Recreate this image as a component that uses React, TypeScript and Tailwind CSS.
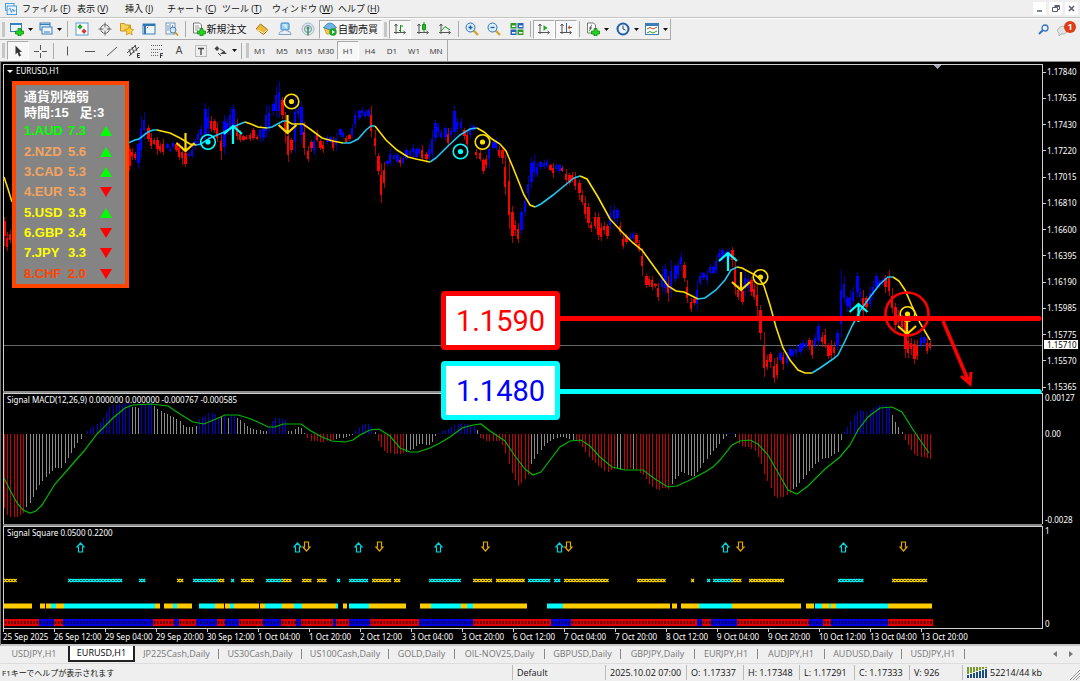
import type { ReactNode } from "react";
import { Fragment } from "react";
import clsx from "clsx";

const MENUS = [
  ["ファイル", "F", "w-[55px]"],
  ["表示", "V", "w-[48px]"],
  ["挿入", "I", "w-[42px]"],
  ["チャート", "C", "w-[55px]"],
  ["ツール", "T", "w-[50px]"],
  ["ウィンドウ", "W", "w-[66px]"],
  ["ヘルプ", "H", "w-[50px]"],
] as const;

const PERIODS = ["M1", "M5", "M15", "M30", "H1", "H4", "D1", "W1", "MN"];

const TABS = [
  ["USDJPY,H1", "w-[68px]"],
  ["EURUSD,H1", "w-[67px]"],
  ["JP225Cash,Daily", "w-[84px]"],
  ["US30Cash,Daily", "w-[83px]"],
  ["US100Cash,Daily", "w-[87px]"],
  ["GOLD,Daily", "w-[66px]"],
  ["OIL-NOV25,Daily", "w-[90px]"],
  ["GBPUSD,Daily", "w-[76px]"],
  ["GBPJPY,Daily", "w-[74px]"],
  ["EURJPY,H1", "w-[63px]"],
  ["AUDJPY,H1", "w-[67px]"],
  ["AUDUSD,Daily", "w-[77px]"],
  ["USDJPY,H1", "w-[63px]"],
] as const;

const STATUS = [
  ["Default", "w-[93px]"],
  ["2025.10.02 07:00", "w-[81px]"],
  ["O: 1.17337", "w-[57px]"],
  ["H: 1.17348", "w-[56px]"],
  ["L: 1.17291", "w-[55px]"],
  ["C: 1.17333", "w-[55px]"],
  ["V: 926", "w-[53px]"],
] as const;

const STRENGTH = [
  ["1.AUD", "7.3", true, "text-[#00ff00]"],
  ["2.NZD", "5.6", true, "text-[#f4a460]"],
  ["3.CAD", "5.3", true, "text-[#f4a460]"],
  ["4.EUR", "5.3", false, "text-[#f4a460]"],
  ["5.USD", "3.9", true, "text-[#ffff00]"],
  ["6.GBP", "3.4", false, "text-[#ffff00]"],
  ["7.JPY", "3.3", false, "text-[#ffff00]"],
  ["8.CHF", "2.0", false, "text-[#ff4500]"],
] as const;

const PRICES = [
  "1.17840", "1.17635", "1.17430", "1.17220", "1.17015", "1.16810", "1.16600",
  "1.16395", "1.16190", "1.15985", "1.15775", "1.15570", "1.15365",
];

const TIMES = [
  "25 Sep 2025", "26 Sep 12:00", "29 Sep 04:00", "29 Sep 20:00", "30 Sep 12:00",
  "1 Oct 04:00", "1 Oct 20:00", "2 Oct 12:00", "3 Oct 04:00", "3 Oct 20:00",
  "6 Oct 12:00", "7 Oct 04:00", "7 Oct 20:00", "8 Oct 12:00", "9 Oct 04:00",
  "9 Oct 20:00", "10 Oct 12:00", "13 Oct 04:00", "13 Oct 20:00",
];

// x, direction (b = up, r = down), high-low
const CANDLES = `4r217-246 7r232-251 10r230-243
129r145-171 132r148-160 135r152-160 138b140-169 141b116-158 144b112-140 148r125-142 151r133-149 154r138-145
157r137-155 160r143-153 163r139-155 167b143-149 170b147-152 173b141-149 176r142-152 179r143-160 182r146-165
185r150-167 189b152-157 192b146-158 195b139-150 198b130-143 201b125-138 205b103-142 208b107-140 211r116-132
214r119-133 217r122-142 221r133-160 224b115-155 227b118-135 230b107-135 233b104-136 237r119-140 240r130-142
243r135-141 246r135-140 250r133-141 253r128-140 257r135-140 260b125-143 263b127-141 266b105-137 269b105-132
273b102-116 276b86-117 279b81-118 282r97-119 285r112-143 288r125-162 291r138-153 295b95-153 298b104-119
301b101-143 304r122-155 308r146-162 311r140-152 314b135-155 317r130-142 320r139-150 323r141-153 327b135-144
330b136-143 333r137-151 336b133-151 340b128-137 343b131-138 346r136-143 349r134-141 352b124-138 355b110-128
359b109-120 362b107-116 365b110-118 368b109-118 371r106-137 375r130-155 378r153-175 381r163-203 384r162-188
387b160-166 390b149-166 394b153-160 397b153-164 400r157-167 403b155-165 406b148-160 410b149-157 413b144-157
416b147-160 419b147-155 422r145-161 426r152-163 429b144-160 432b130-160 435b120-142 438b123-137 441b130-139
445b126-140 448r128-147 451b128-139 454b106-138 457b118-132 461b118-131 464r128-140 467r130-148 470b124-138
473b125-131 476r149-159 480r150-161 483r158-174 486r155-168 489b141-169 493b140-150 496b138-151 499r146-158
502r148-164 505r155-195 509r160-229 512r206-243 515r220-236 518r223-243 521b208-235 525b194-216 528b176-202
531b158-188 534b154-177 537b163-177 540b161-170 544b160-169 547b159-168 550r164-171 553r163-178 556b163-171
559b164-173 562r166-172 566r169-186 569r173-185 572r172-182 575r172-190 579r180-200 582r190-205 585r196-219
588r203-228 591r222-232 595r212-229 598r213-240 601r223-241 604r222-234 607r224-239 610b206-230 614b205-222
617b208-224 620r222-235 623r234-249 626r234-244 630b233-242 633b231-240 636r233-246 639r240-252 642r248-276
646r274-288 649r276-287 652r276-290 655r283-288 658r283-301 662b266-292 665b264-294 668r276-302 671b260-298
675b263-283 678b260-278 681b252-270 684r262-282 687r280-303 691r298-312 694r298-305 697b281-310 700b272-286
703b272-280 707b270-285 710b264-275 713b265-275 716b255-274 719b249-262 722b248-262 726b249-258 729b249-260
732r247-267 735r257-295 738r285-300 742r288-305 745b270-296 748b274-292 751r277-296 754r284-300 757r285-318
760r305-340 764r332-377 767r355-370 770r352-368 774r358-383 777r357-379 780b351-362 783r352-370 787b352-366
790b347-358 793b348-357 796b345-357 800b342-355 803b340-350 806b340-349 809r338-350 812r340-359 815b334-348
818b322-346 822r332-347 825r329-348 828r343-359 831r340-359 834r342-359 837b330-350 841b270-337 844b276-303
847b296-312 850b290-312 853b286-305 857b272-297 860b288-302 863r290-316 866r296-310 870b286-308 873b281-300
876b273-290 879b279-288 882b277-286 885r275-293 889r270-296 892r288-313 895r303-330 898r310-328 902r315-330
905r315-358 908r334-358 911r338-355 914r340-364 917r340-360 921b334-348 924b335-347 927r338-354 930r340-350`
  .split(/\s+/)
  .map((row) => {
    const [, x, dir, high, low] = row.match(/(\d+)([br])(\d+)-(\d+)/)!;
    return { x: +x, up: dir === "b", high: +high, low: +low };
  });

const AVERAGE = [
  ["#ffd700", "4,177 8,189 12,202"],
  ["#1cc8f5", "128,143 135,140 139,139 148,132 153,130 157,130"],
  ["#ffe000", "157,130 170,133 180,138 190,144 196,145"],
  ["#1cc8f5", "196,145 201,144 210,138 222,133 235,126 245,122"],
  ["#ffe000", "245,122 251,124 258,127 267,128"],
  ["#1cc8f5", "267,128 272,127 283,121 287,121"],
  ["#ffe000", "287,121 292,124 303,124 310,129 322,138 333,141 343,143"],
  ["#1cc8f5", "343,143 350,143 358,139 366,130 371,126 375,126"],
  ["#ffe000", "375,126 386,140 397,150 408,157 416,159 430,162"],
  ["#1cc8f5", "430,162 436,158 448,146 460,135 470,129 477,128"],
  ["#ffe000", "477,128 484,132 492,139 500,144 506,151 512,165 518,180 524,195 530,205 535,207"],
  ["#1cc8f5", "535,207 541,204 553,195 564,186 574,178 580,176"],
  ["#ffe000", "580,176 587,179 598,197 610,219 622,232 633,243 642,250 655,268 668,286 676,291 684,292 692,296 698,299"],
  ["#1cc8f5", "698,299 705,298 716,290 725,280 731,270 737,267"],
  ["#ffe000", "737,267 742,268 755,275 759,278 764,286 770,305 776,327 783,348 790,360 798,370 805,373 812,373"],
  ["#1cc8f5", "812,373 820,368 833,359 838,355 845,341 852,326 860,311 870,297 880,284 888,277 893,277"],
  ["#ffe000", "893,277 899,281 905,290 912,306 920,323 930,340"],
] as const;

// Histogram outline: colour, then x:y points that are interpolated between bars
const MACD = `r 4:507 7:515 10:517 17:517 23:513|g 27:507 30:503 33:497 36:491 39:486 43:481 49:474 55:468 62:468 65:463 72:452 78:443 81:439
b 87:431 91:428 97:424 101:422 104:417 107:412 110:407 113:405 120:404 129:403|g 130:406 138:408|b 139:404 152:403
g 154:405 160:411 165:413 170:416 176:418 180:421 183:425 187:427 190:427 196:426|b 197:421 205:415 210:412 215:414 219:417
g 220:417 223:417|b 224:416 226:416|g 227:418 229:418|b 230:415 236:416|g 237:417 244:423 250:428 257:430 267:431
b 269:427 275:418 280:418 286:420|g 287:430 291:432 294:430 298:427 302:428 305:433|r 307:437 311:441 317:441 324:442 334:440
g 335:440 341:438 347:437 353:434|b 355:432 359:427 363:424 368:423 372:427|g 373:430 376:433|r 377:438 381:447 387:453 400:454 405:453
g 406:452 413:449 420:444 430:445 434:440 436:435|b 438:433 445:430 450:428 455:425 461:423 466:424 474:426
g 475:427 479:432|r 481:438 487:441 495:441 499:440 504:446 509:464 514:478 519:486 524:481 529:474
g 530:467 537:455 543:448 548:442 555:439 562:437 573:440|r 574:440 580:443 590:458 597:465 607:472 615:469
g 616:468 621:470|r 622:470 631:468|g 632:469 635:469|r 636:469 643:475 650:484 658:491 662:488 670:489
g 671:485 676:478 682:472 687:474 693:477 698:472 705:462 713:451 719:446 722:440 726:436|b 728:433 733:433|g 734:437 736:437
r 737:442 742:446 748:447 755:451 760:460 765:475 772:490 775:498 784:497 790:493
g 791:490 796:488 801:481 808:473 815:465 822:459 828:458 834:454 838:452 841:441 843:435
b 845:432 851:421 856:412 860:410 866:412 872:409 880:405 886:405 890:407|g 891:412 896:423 902:432
r 903:437 911:449 916:456 924:457 932:459`
  .split(/[|\n]/)
  .map((run) => {
    const [tone, ...points] = run.trim().split(" ");
    return { tone, points: points.map((p) => p.split(":").map(Number)) };
  });

const BAR_STEP = 3.194;
const BAR_TONES: Record<string, string> = { r: "#c80000", g: "#8c8c8c", b: "#0000d8" };

function macdBars() {
  const bars: { x: number; y: number; tone: string }[] = [];
  for (let i = 0; i < 291; i++) {
    const x = 4.5 + i * BAR_STEP;
    const run = MACD.find((r) => x >= r.points[0][0] - 0.6 && x <= r.points[r.points.length - 1][0] + 0.9);
    if (!run) continue;
    const next = run.points.findIndex((p) => p[0] >= x);
    let y = run.points[next < 0 ? run.points.length - 1 : next][1];
    if (next > 0) {
      const [x0, y0] = run.points[next - 1];
      const [x1, y1] = run.points[next];
      y = y0 + ((x - x0) / (x1 - x0)) * (y1 - y0);
    }
    bars.push({ x: Math.floor(x), y: Math.round(y), tone: BAR_TONES[run.tone] });
  }
  return bars;
}

const SIGNAL_LINE =
  "4,478 10,490 17,503 23,510 30,513 36,511 42,505 55,484 70,467 84,451 97,434 113,418 125,408 133,405 150,404 160,405 168,406 180,414 193,422 204,424 216,419 225,415 238,415 248,418 258,422 268,427 275,427 283,424 301,424 311,431 322,437 332,441 345,442 353,440 360,435 370,430 379,429 390,436 400,448 410,452 418,452 430,448 440,443 450,437 462,428 473,425 481,424 490,431 505,441 515,456 525,469 533,475 541,472 550,460 560,447 570,441 581,440 590,446 600,457 612,467 625,470 643,470 655,479 668,487 677,486 690,480 705,472 713,467 720,460 732,445 740,441 750,440 758,444 768,455 780,476 788,490 797,494 808,486 825,469 840,457 850,445 858,430 868,417 880,408 892,407 902,412 912,428 920,440 929,453";

const parseRuns = (text: string) =>
  text.split(" ").map((run) => {
    const [from, to] = run.slice(1).split("-").map(Number);
    return { tone: run[0], from, to };
  });

const CROSSES = parseRuns(
  "y4-18 c68-123 c139-146 y177-184 c193-218 y218-223 c231-235 y241-255 c266-282 y282-293 y302-312 y317-328 c337-340 c349-369 y372-392 y394-401 c429-462 y473-491 y496-526 c528-551 c554-561 y564-609 y637-666 y691-695 c707-711 c713-732 y732-743 y749-784 c838-864 y892-928",
);
const BAND = parseRuns(
  "y4-32 y40-45 y46-51 c51-56 y56-64 c64-155 y155-160 y164-173 c173-177 y177-192 c199-215 y215-224 y225-230 c230-234 y234-259 y260-265 c265-282 y282-294 c294-302 y302-336 c336-338 y343-347 c349-369 y369-406 y420-431 c431-461 y461-467 c467-473 y473-527 c547-563 y563-670 y672-677 y681-699 c699-732 y732-801 y806-814 c815-822 y822-829 c829-831 y831-836 c836-888 y888-932",
);
const SQUARES = parseRuns(
  "r4-39 b39-54 r54-63 b63-153 r153-174 b174-179 r179-196 b196-217 r217-225 b225-239 r239-263 b263-281 r281-296 b296-301 r301-333 b333-336 r336-349 b349-370 r370-419 b419-473 r473-551 b551-571 r571-697 b697-702 r702-711 b711-737 r737-809 b809-823 r823-831 b831-888 r888-933",
);
const UP_SIGNALS = [80, 297, 358, 438, 559, 725, 843];
const DOWN_SIGNALS = [306, 379, 485, 568, 740, 903];

function steps(from: number, to: number) {
  const count = Math.max(1, Math.round((to - from) / BAR_STEP));
  return Array.from({ length: count }, (_, i) => from + 1.6 + i * BAR_STEP);
}

/* ---------- toolbar ---------- */

function Icon({ children, size = 14 }: { children: ReactNode; size?: number }) {
  return (
    <svg aria-hidden width={size} height={size} viewBox="0 0 14 14" fill="none" className="shrink-0">
      {children}
    </svg>
  );
}

function Caret() {
  return (
    <svg aria-hidden width="5" height="3" viewBox="0 0 5 3" className="shrink-0">
      <path d="M0 0h5L2.500 3z" fill="#111" />
    </svg>
  );
}

function Grip() {
  return <span className="mx-[2px] h-[15px] w-[3px] shrink-0 bg-[#c6c6c6]" />;
}

function Divider() {
  return <span className="mx-[2px] h-4 w-px shrink-0 bg-[#aaa]" />;
}

type ToolProps = { label: string; children: ReactNode; pressed?: boolean; width?: string };

function Tool({ label, children, pressed, width = "w-[22px]" }: ToolProps) {
  return (
    <button
      type="button"
      aria-label={label}
      className={clsx(
        "flex h-[19px] shrink-0 items-center justify-center gap-1 whitespace-nowrap border text-[10px] text-[#111]",
        pressed ? "border-b-white border-r-white border-l-[#aaa] border-t-[#aaa] bg-[#f7f7f7]" : "border-transparent",
        width,
      )}
    >
      {children}
    </button>
  );
}

const plus = <path d="M8 6.500h3V9h2.500v3H11v2H8v-2H5.500V9H8z" fill="#22d322" stroke="#0a7d0a" strokeWidth=".7" />;
const axes = <path d="M3 2v10M1.500 4 3 2l1.500 2M1 10.500h11M10.500 9l2 1.500-2 1.500" stroke="#555" />;

function MainToolbar() {
  return (
    <div className="flex h-[21px] w-max items-center border-b border-r border-[#aaa]">
      <Grip />
      <Tool label="新規チャート" width="w-[28px]">
        <Icon>
          <rect x=".5" y="1.500" width="11" height="8" fill="#eaf4fd" stroke="#3a7fb8" />
          <path d="M.5 2.500h11" stroke="#3a7fb8" />
          {plus}
        </Icon>
        <Caret />
      </Tool>
      <Tool label="チャートの組表示" width="w-[30px]">
        <Icon>
          <rect x="1" y="1" width="10" height="7" fill="#d5e9fa" stroke="#3a7fb8" />
          <rect x="3" y="5" width="10" height="7" fill="#eaf4fd" stroke="#3a7fb8" />
          <path d="M1 2.500h10M5 10h6" stroke="#3a7fb8" />
        </Icon>
        <Caret />
      </Tool>
      <Divider />
      <Tool label="気配値表示" width="w-[23px]">
        <Icon>
          <rect x="1" y="1" width="12" height="12" fill="#fff" stroke="#5b9bd0" />
          <path d="M5 2 7.500 4.700 5 7.500 2.500 4.700z" fill="#1ea51e" />
          <path d="m9 6.500 2.500 2.700L9 12 6.500 9.200z" fill="#d33" />
        </Icon>
      </Tool>
      <Tool label="データウィンドウ" width="w-[23px]">
        <Icon>
          <circle cx="7" cy="7" r="4.300" stroke="#666" />
          <path d="M7 .5v5M7 8.500v5M.5 7h5M8.500 7h5" stroke="#666" />
        </Icon>
      </Tool>
      <Tool label="ナビゲーター">
        <Icon>
          <path d="M.5 1.500h4l1 1.500h5v6H.5z" fill="#f6d25e" stroke="#c79419" />
          <path d="m9.200 4 1.400 3 3.200.4-2.300 2.200.7 3.300-3-1.600-2.900 1.600.6-3.300L4.600 7.400 7.800 7z" fill="#ffd13b" stroke="#c08a12" strokeWidth=".7" />
        </Icon>
      </Tool>
      <Tool label="ターミナル">
        <Icon>
          <rect x="1" y="2" width="12" height="10" fill="#eef6fd" stroke="#3a7fb8" />
          <path d="M1 3h12M3 3v9" stroke="#2f74b5" strokeWidth="2" />
          <path d="M5.500 5v1" stroke="#d33" />
        </Icon>
      </Tool>
      <Tool label="ストラテジーテスター" width="w-[23px]">
        <Icon>
          <rect x="1" y="1" width="9" height="11" fill="#f5f8fb" stroke="#7795b5" />
          <path d="M3 3v6M5 2v5M7.500 3v4" stroke="#7795b5" />
          <circle cx="8" cy="8" r="3" fill="#cde6f8" fillOpacity=".8" stroke="#4386bd" />
          <path d="m10 10 3 3.500" stroke="#c79419" strokeWidth="1.600" />
        </Icon>
      </Tool>
      <Divider />
      <Tool label="新規注文" width="w-[62px]">
        <Icon>
          <path d="M1.500 1h6l2 2v8h-8z" fill="#fff" stroke="#777" />
          <path d="M3 4h4M3 6h5M3 8h3" stroke="#999" />
          {plus}
        </Icon>
        <span className="-ml-[3px]">新規注文</span>
      </Tool>
      <Tool label="メタエディター" width="w-[23px]">
        <Icon>
          <path d="m1 7 4.500-5L13 8l-4.500 4.500z" fill="#edb93c" stroke="#a8700e" />
          <path d="m1.500 7.500 7 3.500 4-3" stroke="#fff1b8" />
        </Icon>
      </Tool>
      <Tool label="コミュニティ" width="w-[23px]">
        <Icon>
          <rect x="3" y="1" width="8" height="7" rx="1" fill="#9ad3f7" stroke="#2f86c6" />
          <path d="M1 12.500c0-3 2-3 3-3 1-2 5-2 6 0 2 0 3 1 3 3z" fill="#e4edf6" stroke="#7f9fbd" />
          <path d="M5 3h3v3" stroke="#fff" />
        </Icon>
      </Tool>
      <Tool label="シグナル" width="w-[23px]">
        <Icon>
          <circle cx="7" cy="7" r="6" fill="#dde5ee" stroke="#a9b7c6" />
          <circle cx="7" cy="7" r="3.500" stroke="#6d8fb4" />
          <circle cx="7" cy="6" r="1.500" fill="#3c9a3c" />
          <path d="M7 6v7.500" stroke="#3c9a3c" strokeWidth="1.500" />
        </Icon>
      </Tool>
      <Tool label="自動売買" pressed width="w-[63px]">
        <Icon>
          <path d="M1 5.500 7 8l6-2.500L11 12H3.500z" fill="#f4cc4c" stroke="#b98a18" strokeWidth=".7" />
          <path d="M.5 5.500C2 5 3 1 7 1s5 4 6.500 4.500L7 8z" fill="#6fb4e6" stroke="#2f74b5" strokeWidth=".7" />
          <circle cx="10" cy="10" r="3.700" fill="#16a62a" />
          <path d="M9 8v4l3-2z" fill="#fff" />
        </Icon>
        <span className="-ml-[3px]">自動売買</span>
      </Tool>
      <Grip />
      <Tool label="バーチャート" pressed>
        <Icon>
          {axes}
          <path d="M7.500 3v7M6 8.500h1.500M7.500 4H10" stroke="#169016" />
        </Icon>
      </Tool>
      <Tool label="ローソク足" width="w-[23px]">
        <Icon>
          {axes}
          <path d="M8 0v10" stroke="#169016" />
          <path d="M6.500 2.500h3v5h-3z" fill="#22c32c" stroke="#169016" />
        </Icon>
      </Tool>
      <Tool label="ラインチャート">
        <Icon>
          {axes}
          <path d="m3 9 4-4.500L12 8" stroke="#169016" />
        </Icon>
      </Tool>
      <Divider />
      {["M3 5h4M5 3v4", "M3 5h4"].map((d, i) => (
        <Tool key={d} label={i ? "縮小" : "拡大"}>
          <Icon>
            <path d="m8.500 8.500 4.500 4.500" stroke="#d8a62a" strokeWidth="2.400" />
            <circle cx="5.500" cy="5.500" r="4.500" fill="#d8eefb" stroke="#2f74b5" />
            <path d={d} transform="translate(.5 .5)" stroke="#1d5fa5" strokeWidth="1.300" />
          </Icon>
        </Tool>
      ))}
      <Tool label="整列" width="w-[23px]">
        <Icon>
          <path d="M.5 1h6v5.500h-6zM7.500 7.500h6V13h-6z" fill="#2e9c24" />
          <path d="M7.500 1h6v5.500h-6zM.5 7.500h6V13h-6z" fill="#2563c0" />
          <path d="M2 3.500h3.500V5H2zM9 3.500h3.500V5H9zM2 10h3.500v1.500H2zM9 10h3.500v1.500H9z" fill="#fff" />
        </Icon>
      </Tool>
      <Divider />
      <Tool label="自動スクロール" pressed>
        <Icon>
          {axes}
          <path d="M6.500 3v6l4-3z" fill="#22a82c" />
        </Icon>
      </Tool>
      <Tool label="チャートシフト" pressed>
        <Icon>
          {axes}
          <path d="M7.500 1v9" stroke="#2563c0" />
          <path d="M13 5.500H9.500M11 4 9 5.500 11 7" stroke="#c34a12" />
        </Icon>
      </Tool>
      <Divider />
      <Tool label="インディケータ" width="w-[30px]">
        <Icon>
          <path d="M1.500 1h6l2 2v8h-8z" fill="#fff" stroke="#777" />
          <path d="M6 3c-2 0-1 6-3 6M3 6h3" stroke="#555" />
          {plus}
        </Icon>
        <Caret />
      </Tool>
      <Tool label="周期" width="w-[30px]">
        <Icon>
          <circle cx="7" cy="7" r="5.500" fill="#e9f4fd" stroke="#245f9f" strokeWidth="2" />
          <path d="M7 3.500V7l2.500 1" stroke="#444" />
        </Icon>
        <Caret />
      </Tool>
      <Tool label="テンプレート" width="w-[28px]">
        <Icon>
          <rect x=".5" y="1.500" width="13" height="11" fill="#fff" stroke="#3a7fb8" />
          <path d="M1 3h12" stroke="#3a7fb8" strokeWidth="2" />
          <path d="m2 7 3-1.500L8 7l4-2" stroke="#b4521f" />
          <path d="m2 11 3-1.500L8 11l4-2" stroke="#2e9c24" />
        </Icon>
        <Caret />
      </Tool>
    </div>
  );
}

function DrawingToolbar() {
  return (
    <div className="flex h-[21px] w-max items-center border-r border-[#aaa]">
      <Grip />
      <Tool label="カーソル" pressed>
        <Icon>
          <path d="M4.500 1.500v9l2-2 1.500 4 2-.8-1.700-3.700h2.700z" fill="#333" />
        </Icon>
      </Tool>
      <Tool label="クロスヘア">
        <Icon>
          <path d="M7.500 1v5M7.500 9v5M1 7.500h5M9 7.500h5" stroke="#555" />
        </Icon>
      </Tool>
      <Divider />
      <Tool label="垂直線">
        <Icon>
          <path d="M7.500 2.500v9" stroke="#555" />
        </Icon>
      </Tool>
      <Tool label="水平線" width="w-[23px]">
        <Icon>
          <path d="M2 7.500h10" stroke="#555" />
        </Icon>
      </Tool>
      <Tool label="トレンドライン">
        <Icon>
          <path d="m2 12 10-9" stroke="#555" />
        </Icon>
      </Tool>
      <Tool label="チャネル">
        <Icon>
          <path d="M0 9 9 1M2 12l10-9M2 5l2 6M5 3l2 6M8 1l2 6" stroke="#444" />
          <path d="M13 9.500h-2.500v4H13M10.500 11.500h2" stroke="#333" />
        </Icon>
      </Tool>
      <Tool label="フィボナッチ" width="w-[23px]">
        <Icon>
          <path d="M1 1.500h12M1 5.500h12M1 8.500h8M1 11.500h8" stroke="#666" strokeDasharray="1 1" />
          <path d="M10.500 14V9.500H13M10.500 11.500h2" stroke="#333" />
        </Icon>
      </Tool>
      <Tool label="テキスト">
        <span className="font-['Liberation_Sans',sans-serif] text-[10px] text-[#444]">A</span>
      </Tool>
      <Tool label="テキストラベル">
        <Icon>
          <rect x="1.500" y="1.500" width="11" height="11" stroke="#888" strokeDasharray="1 1" />
          <path d="M4 4.500h6M7 4.500V11" stroke="#444" strokeWidth="1.300" />
        </Icon>
      </Tool>
      <Tool label="矢印" width="w-[27px]">
        <Icon>
          <path d="m3 2 2.500 2.500L3 7 .5 4.500zM9.500 7 13 10H6z" fill="#444" />
          <path d="m6 5 5 3M4 9l3 3" stroke="#444" />
        </Icon>
        <Caret />
      </Tool>
      <Divider />
      <Grip />
      <div className="-ml-[2px] flex">
        {PERIODS.map((period) => (
          <button
            key={period}
            type="button"
            className={clsx(
              "h-[19px] w-[22px] shrink-0 border text-[8px] text-[#333]",
              period === "H1" ? "border-b-white border-r-white border-l-[#aaa] border-t-[#aaa] bg-[#f7f7f7]" : "border-transparent",
            )}
          >
            {period}
          </button>
        ))}
      </div>
    </div>
  );
}

function Header() {
  return (
    <header>
      <div className="flex h-[18px] items-center justify-between border-b border-[#c4c4c4]">
        <nav className="flex items-center text-[9px] text-[#111]">
          <span className="flex w-[22px] justify-center">
            <Icon size={12}>
              <rect x=".5" y=".5" width="10" height="8" fill="#eaf4fd" stroke="#3a8fd0" />
              <rect x="2.500" y="3.500" width="11" height="10" fill="#eaf4fd" stroke="#3a8fd0" />
              <path d="m4 8 2-2 1.500 5L9 7l1.500 3L12 8" stroke="#3a8fd0" />
            </Icon>
          </span>
          {MENUS.map(([label, key, width]) => (
            <button key={key} type="button" className={clsx("whitespace-nowrap text-left", width)}>
              {label} (<u>{key}</u>)
            </button>
          ))}
        </nav>
        <div className="flex gap-[3px] pr-[2px]">
          {["M3 8h5", "M4.500 2.500h5v4h-2M2.500 4.500h5v4h-5zM4.500 3.500h5", "m3 3 5 5M8 3 3 8"].map((d, i) => (
            <button
              key={d}
              type="button"
              aria-label={["最小化", "元に戻す", "閉じる"][i]}
              className="flex h-[13px] w-[13px] items-center justify-center bg-white"
            >
              <svg width="11" height="11" viewBox="0 0 11 11" fill="none" stroke="#566070" strokeWidth={i === 1 ? 1 : 1.5}>
                <path d={d} />
              </svg>
            </button>
          ))}
        </div>
      </div>
      <div className="flex justify-between border-b border-[#8c8c8c] border-t border-t-white">
        <div>
          <MainToolbar />
          <DrawingToolbar />
        </div>
        <div className="flex items-start pr-1 pt-[2px]">
          <button type="button" aria-label="検索" className="mt-[3px] mr-[7px]">
            <svg width="11" height="11" viewBox="0 0 11 11" fill="none" stroke="#2f74c0">
              <circle cx="7" cy="4" r="3" strokeWidth="1.300" />
              <path d="M5 6 1 10" strokeWidth="2" />
            </svg>
          </button>
          <button type="button" aria-label="通知" className="relative h-4 w-5">
            <svg width="20" height="16" viewBox="0 0 20 16">
              <path d="M3 7c3-3 8-2 8 2s-3 4-6 4l-2 2v-3C1 11 1 9 3 7z" fill="#e2e2e2" stroke="#b5b5b5" />
            </svg>
            <span className="absolute right-0 top-0 h-3 w-3 rounded-full bg-[#e03c14] text-center text-[9px] font-bold leading-3 text-white">
              1
            </span>
          </button>
        </div>
      </div>
    </header>
  );
}

/* ---------- chart ---------- */

function Pane({ label, children, axis }: { label: ReactNode; children: ReactNode; axis: ReactNode }) {
  return (
    <section className="flex">
      <div className="relative min-w-0 flex-1 border-l border-t border-[#d0d0d0]">
        {children}
        <h2 className="absolute left-[3px] top-[1px] flex items-center gap-[3px] whitespace-nowrap leading-[10px] text-white">
          {label}
        </h2>
      </div>
      <div className="relative flex w-[38px] shrink-0 flex-col justify-between border-l border-[#d0d0d0] leading-[8px] text-white">
        {axis}
      </div>
    </section>
  );
}

function Splitter() {
  return <div className="mr-[38px] h-[2px] bg-[#8a8a8a]" />;
}

function StrengthPanel() {
  return (
    <aside className="absolute left-[11px] top-[19px] w-[117px] border-4 border-[#ff4500] bg-[#848484] pl-2 pt-1 font-['Liberation_Sans','Noto_Sans_CJK_JP',sans-serif]">
      <h3 className="text-[13px] font-bold leading-4 text-white">通貨別強弱</h3>
      <p className="whitespace-pre text-[13px] font-bold leading-4 text-white">{"時間:15   足:3"}</p>
      <table className="h-[163px] w-full text-[13px] font-bold leading-4">
        <tbody>
          {STRENGTH.map(([name, value, up, tone]) => (
            <tr key={name} className={tone}>
              <td className="w-[44px] p-0">{name}</td>
              <td className="p-0">{value}</td>
              <td className="w-[25px] p-0">
                <svg width="12" height="10" viewBox="0 0 12 10" aria-label={up ? "上昇" : "下落"}>
                  <path d={up ? "M6 0 12 10H0z" : "M0 0h12L6 10z"} fill={up ? "#00ff00" : "#ff0000"} />
                </svg>
              </td>
            </tr>
          ))}
        </tbody>
      </table>
    </aside>
  );
}

function PriceArrow({ x, y, up }: { x: number; y: number; up?: boolean }) {
  const d = up ? "M0 19V1M-9 9 0 1l9 8" : "M0 0v18M-9 10l9 8 9-8";
  return <path d={d} transform={`translate(${x} ${y})`} stroke={up ? "#00ffff" : "#ffd700"} strokeWidth="2.200" fill="none" />;
}

function Target({ x, y, tone }: { x: number; y: number; tone: string }) {
  return (
    <g>
      <circle cx={x} cy={y} r="7.300" stroke={tone} strokeWidth="1.600" fill="none" />
      <circle cx={x} cy={y} r="2.600" fill={tone} />
    </g>
  );
}

function PricePlot() {
  return (
    <svg viewBox="4 65 1038 326" className="block h-auto w-full" shapeRendering="crispEdges">
      <path d="M4 345.500h1038" stroke="#5f6b6b" />
      {CANDLES.map(({ x, up, high, low }, i) => {
        const range = low - high;
        const top = high + Math.round(range * (i % 3 === 0 ? 0.15 : 0.3));
        const bottom = low - Math.round(range * (i % 4 === 0 ? 0.35 : 0.2));
        return (
          <g key={x} fill={up ? "#0000ff" : "#ff0000"}>
            <rect x={x} y={high} width="1" height={range} fillOpacity=".7" />
            <rect x={x - 1} y={top} width={i % 3 ? 2 : 3} height={Math.max(2, bottom - top)} />
          </g>
        );
      })}
      <g fill="none" strokeWidth="1.600" shapeRendering="auto">
        {AVERAGE.map(([tone, points]) => (
          <polyline key={points} points={points} stroke={tone} />
        ))}
      </g>
      <g shapeRendering="auto">
        <PriceArrow x={185.5} y={133} />
        <Target x={208} y={142} tone="#00ffff" />
        <PriceArrow x={233} y={125} up />
        <Target x={291.5} y={101.5} tone="#ffe000" />
        <PriceArrow x={287.5} y={115} />
        <Target x={460.5} y={151.5} tone="#00ffff" />
        <Target x={482.5} y={142} tone="#ffe000" />
        <PriceArrow x={728} y={252} up />
        <PriceArrow x={741} y={272} />
        <Target x={760.5} y={277} tone="#ffe000" />
        <PriceArrow x={858.5} y={303} up />
        <Target x={907.5} y={314} tone="#ffe000" />
        <PriceArrow x={907} y={316} />
      </g>
      <path d="M933 65h8l-4 4z" fill="#a0a8b8" />
    </svg>
  );
}

function MacdPlot() {
  return (
    <svg viewBox="4 394 1038 130" className="block h-auto w-full">
      <g shapeRendering="crispEdges">
        {macdBars().map(({ x, y, tone }) => (
          <rect key={x} x={x} y={Math.min(y, 434)} width="1" height={Math.max(1, Math.abs(y - 434))} fill={tone} />
        ))}
      </g>
      <polyline points={SIGNAL_LINE} fill="none" stroke="#00b800" strokeWidth="1.200" />
    </svg>
  );
}

function SquarePlot() {
  return (
    <svg viewBox="4 527 1038 101" className="block h-auto w-full">
      {UP_SIGNALS.map((x) => (
        <path key={x} d="M-3.500 0 0-4 3.500 0H2v5h-4V0z" transform={`translate(${x + 0.5} 547)`} stroke="#00d8e0" strokeWidth="1.200" fill="none" />
      ))}
      {DOWN_SIGNALS.map((x) => (
        <path key={x} d="M-3.500 0 0 4 3.500 0H2v-5h-4V0z" transform={`translate(${x + 0.5} 547)`} stroke="#e0a800" strokeWidth="1.200" fill="none" />
      ))}
      {CROSSES.map(({ tone, from, to }) => (
        <path
          key={from}
          d={steps(from, to).map((x) => `M${x - 1.4} 579l2.800 3M${x + 1.4} 579l-2.800 3`).join("")}
          stroke={tone === "y" ? "#ffd800" : "#00ffff"}
          strokeWidth="1.200"
        />
      ))}
      {BAND.map(({ tone, from, to }) => (
        <rect key={from} x={from} y="603.500" width={to - from} height="5" fill={tone === "y" ? "#ffcc00" : "#00ffff"} />
      ))}
      {SQUARES.map(({ tone, from, to }) => (
        <Fragment key={from}>
          <rect x={from} y="619" width={to - from} height="7" fill={tone === "r" ? "#e00000" : "#0000e0"} />
          {steps(from, to).map((x) => (
            <rect key={x} x={x - 0.9} y="621" width="1.600" height="3" fill={tone === "r" ? "#500000" : "#000058"} />
          ))}
        </Fragment>
      ))}
    </svg>
  );
}

function Chart() {
  return (
    <main className="relative border-b-2 border-[#c4c4c4] border-l border-l-[#777] bg-black pl-[2px] pt-[2px] font-['Noto_Sans',sans-serif] text-[8px]">
      <Pane
        label={
          <>
            <svg width="6" height="3" viewBox="0 0 6 3" aria-hidden>
              <path d="M0 0h6L3 3z" fill="#fff" />
            </svg>
            EURUSD,H1
          </>
        }
        axis={
          <>
            <ol className="flex flex-1 flex-col justify-between pt-1">
              {PRICES.map((price) => (
                <li key={price} className="flex items-center gap-px">
                  <span className="h-px w-[3px] bg-[#d0d0d0]" />
                  {price}
                </li>
              ))}
            </ol>
            <span className="absolute left-px top-[276px] w-[34px] bg-white pl-[3px] leading-[9px] text-black">1.15710</span>
          </>
        }
      >
        <PricePlot />
      </Pane>
      <Splitter />
      <Pane
        label="Signal MACD(12,26,9) 0.000000 0.000000 -0.000767 -0.000585"
        axis={
          <ol className="flex flex-1 flex-col pl-[2px] pt-px">
            <li className="grow-[28]">0.00127</li>
            <li className="grow-[77]">0.00</li>
            <li>-0.0028</li>
          </ol>
        }
      >
        <MacdPlot />
      </Pane>
      <Splitter />
      <Pane
        label="Signal Square 0.0500 0.2200"
        axis={
          <ol className="flex flex-1 flex-col justify-between pl-[2px] pt-px">
            <li>1</li>
            <li>0</li>
          </ol>
        }
      >
        <SquarePlot />
      </Pane>
      <div className="mr-[37px] h-px bg-[#d0d0d0]" />
      <ol className="flex h-[15px] leading-[10px] text-white">
        {TIMES.map((time) => (
          <li key={time} className="w-[51px] shrink-0 whitespace-nowrap">
            <span className="block h-[3px] w-px bg-[#d0d0d0]" />
            {time}
          </li>
        ))}
      </ol>

      {/* hand-drawn levels sit above every pane */}
      <svg viewBox="1 62 1079 582" className="pointer-events-none absolute left-0 top-0 h-auto w-full" fill="none">
        <path d="M558 318.500h481" stroke="#ff0000" strokeWidth="5" strokeLinecap="round" />
        <path d="M558 391.500h481" stroke="#00ffff" strokeWidth="5" strokeLinecap="round" />
        <circle cx="907" cy="314" r="21.500" stroke="#ff0000" strokeWidth="2.600" />
        <path d="m943 321 25 59" stroke="#ff0000" strokeWidth="3.500" />
        <path d="m961 376 9 8 1-12" stroke="#ff0000" strokeWidth="3" />
      </svg>
      <StrengthPanel />
      <p className="absolute left-[440px] top-[229px] flex h-[59px] w-[119px] items-center justify-center rounded border-[5px] border-[#ff0000] bg-white pt-[2px] font-['Roboto',sans-serif] text-[29px] text-[#ff0000]">
        1.1590
      </p>
      <p className="absolute left-[440px] top-[299px] flex h-[59px] w-[119px] items-center justify-center rounded border-[5px] border-[#00ffff] bg-white pt-[2px] font-['Roboto',sans-serif] text-[29px] text-[#0000ff]">
        1.1480
      </p>
    </main>
  );
}

/* ---------- bottom bars ---------- */

function ChartTabs() {
  return (
    <div className="flex h-[17px] items-start justify-between text-[9px] text-[#777]">
      <div role="tablist" className="flex">
        {TABS.map(([name, width], i) => (
          <button
            key={i}
            role="tab"
            type="button"
            aria-selected={i === 1}
            className={clsx(
              "flex h-4 shrink-0 items-center justify-center whitespace-nowrap",
              width,
              i === 1 && "border-2 border-t-0 border-[#222] bg-white text-black",
            )}
          >
            <span className="flex-1 text-center">{name}</span>
            {i > 1 && <span className="h-[10px] w-px bg-[#888]" />}
          </button>
        ))}
      </div>
      <div className="flex h-4 items-center gap-3 pr-[7px]">
        {["M4 0v6L0 3z", "M0 0v6l4-3z"].map((d, i) => (
          <button key={d} type="button" aria-label={i ? "次へ" : "前へ"}>
            <svg width="4" height="6" viewBox="0 0 4 6">
              <path d={d} fill="#777" />
            </svg>
          </button>
        ))}
      </div>
    </div>
  );
}

function StatusBar() {
  return (
    <footer className="flex h-[18px] items-center border-t border-[#ddd] text-[9px] text-[#111]">
      <span className="min-w-0 flex-1 truncate pl-[2px] text-[8px]">F1キーでヘルプが表示されます</span>
      {STATUS.map(([text, width]) => (
        <span key={text} className={clsx("h-[15px] shrink-0 whitespace-nowrap border-l border-[#bbb] pl-1 leading-[15px]", width)}>
          {text}
        </span>
      ))}
      <span className="relative flex h-[15px] w-[118px] shrink-0 items-center gap-[3px] border-l border-[#bbb] pl-1">
        <svg width="20" height="11" viewBox="0 0 20 11" aria-hidden shapeRendering="crispEdges">
          {[0, 1, 2, 3, 4, 5, 6].map((i) => (
            <Fragment key={i}>
              <path d={`M${i * 3} 0h2v${7 - i}h-2z`} fill="#7b9a2c" />
              <path d={`M${i * 3} ${8 - i}h2v${3 + i}h-2z`} fill="#1d4e7e" />
            </Fragment>
          ))}
        </svg>
        52214/44 kb
        <svg width="11" height="11" viewBox="0 0 11 11" className="absolute bottom-0 right-0" stroke="#999" aria-hidden>
          <path d="M1 11 11 1M4 11l7-7M7 11l4-4" />
        </svg>
      </span>
    </footer>
  );
}

export default function App() {
  return (
    <div className="min-h-screen overflow-x-hidden bg-[#efefef] font-['Open_Sans','Noto_Sans_CJK_JP',sans-serif]">
      <Header />
      <Chart />
      <ChartTabs />
      <StatusBar />
    </div>
  );
}
